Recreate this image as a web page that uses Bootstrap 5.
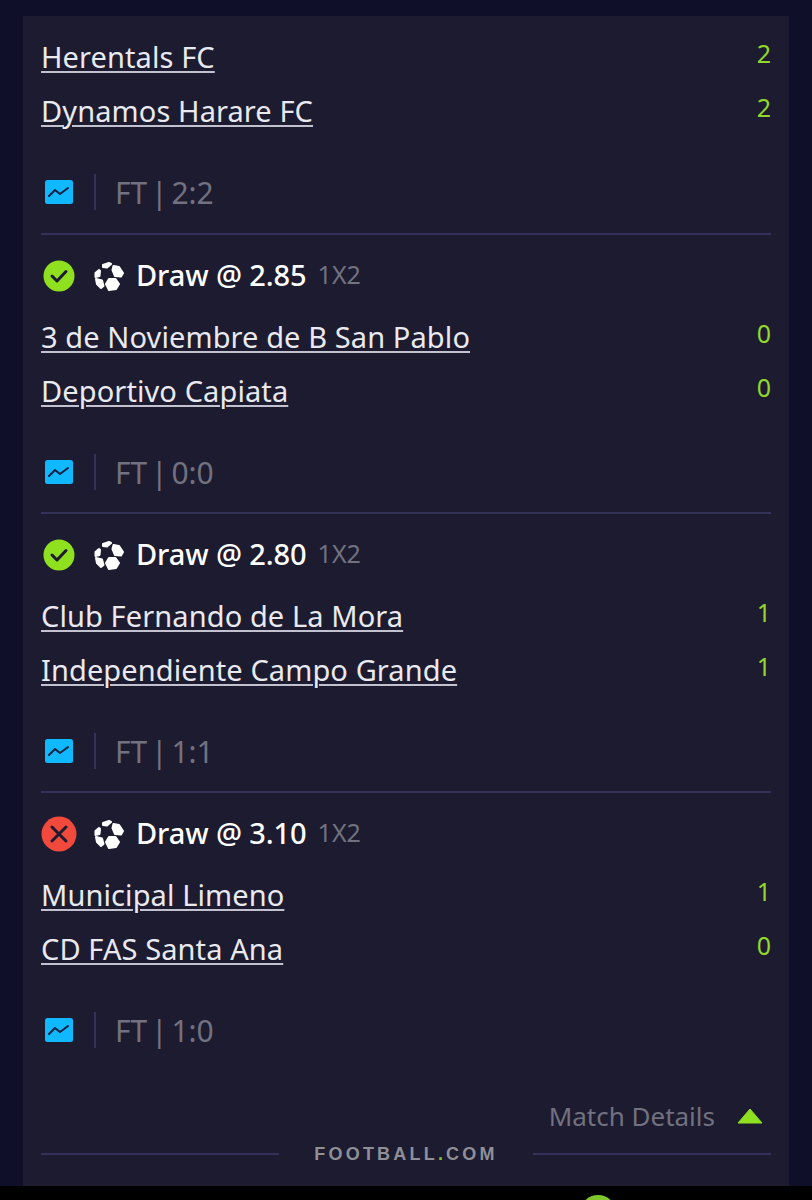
<!DOCTYPE html>
<html lang="en">
<head>
  <meta charset="UTF-8" />
  <title>Match Details</title>
  <meta name="viewport" content="width=device-width, initial-scale=1" />
  <link href="https://cdn.jsdelivr.net/npm/bootstrap@5.3.2/dist/css/bootstrap.min.css" rel="stylesheet" />
  <style>
    body {
      background: #100f29;
      font-family: "Noto Sans", sans-serif;
      height: 1200px;
      overflow: hidden;
    }
    .slip-panel {
      background: #1c1b30;
      margin: 16px 23px 0 23px;
      height: 1170px;
      padding: 15px 18px 0 18px;
    }
    .bet-block { border-bottom: 2px solid #34315a; height: 279px; padding-top: 19px; }
    .bet-block.first-block { height: 204px; padding-top: 0; }
    .bet-block.last-block { border-bottom: 0; height: 277px; }
    .bet-head { height: 44px; margin-bottom: 13px; }
    .won-icon { margin: 0 19px 0 2px; }
    .lost-icon { margin-right: 17px; }
    .pick-text { color: #fff; font-size: 29px; font-weight: 500; letter-spacing: -0.1px; margin-left: 12px; position: relative; top: -1px; }
    .market-text { color: #72717f; font-size: 25px; margin-left: 11px; position: relative; top: -1px; }
    .team-row { height: 54px; }
    .team-link { color: #e9e9ef; font-size: 29px; letter-spacing: 0.1px; line-height: 40px; margin-top: -2px; text-decoration: underline #c2c1d0; text-decoration-thickness: 2px; text-underline-offset: 3px; }
    .score-num { color: #92d72c; font-size: 25px; padding-bottom: 8px; }
    .stat-row { height: 40px; margin-top: 33px; padding-left: 4px; }
    .stat-sep { width: 2px; height: 36px; background: #34315a; margin: 0 19px 0 21px; }
    .stat-text { color: #72717f; font-size: 30px; word-spacing: -4px; }
    .details-row { height: 40px; margin-top: 26px; color: #72717f; font-size: 26px; }
    .details-arrow { margin: 0 8px 0 22px; }
    .brand-row { height: 24px; margin-top: 6px; }
    .brand-line { flex: 1; height: 2px; background: #34315a; }
    .brand-text { color: #8f8f98; font-size: 18px; font-weight: 700; letter-spacing: 3.2px; margin: 0 35px; font-family: "Liberation Sans", sans-serif; }
    .brand-text span { color: #7fc62a; }
    .bottom-bar { background: #000; height: 14px; overflow: hidden; }
    .green-bump { width: 36px; height: 36px; border-radius: 50%; background: #7ec62a; margin: 9px 0 0 580px; }
  </style>
</head>
<body>

<svg width="0" height="0" class="d-block">
  <defs>
    <symbol id="ico-ball" viewBox="0 0 30 29">
      <g fill="#fff" stroke="#fff" stroke-width="2" stroke-linejoin="round">
        <path d="M9 3 L15 1 L17 2 L13 5.5 L9 5 Z"/>
        <path d="M19.5 4 L25 5 L29 11 L27 14.5 L21 14 L18.5 8 Z"/>
        <path d="M15 17 L21.5 17 L25 22 L22 27 L15 28 L12 22 Z"/>
        <path d="M2 17 L8 18.5 L9.5 24 L7 26 L3 22 Z"/>
        <path d="M5 8 L6 9 L5.5 14 L1.5 15 L1.5 11 Z"/>
      </g>
    </symbol>
    <symbol id="ico-chart" viewBox="0 0 28 24">
      <rect width="28" height="24" rx="2.5" fill="#10b8ff"/>
      <path d="M4 16 L10 10 L15 14 L23 8" fill="none" stroke="#14213f" stroke-width="2" stroke-linecap="round" stroke-linejoin="round"/>
    </symbol>
    <symbol id="ico-won" viewBox="0 0 32 32">
      <circle cx="16" cy="16" r="15.5" fill="#8fe01f"/>
      <path d="M9 16 L14 21 L23 11.5" fill="none" stroke="#1c1b30" stroke-width="3" stroke-linecap="round" stroke-linejoin="round"/>
    </symbol>
    <symbol id="ico-lost" viewBox="0 0 36 36">
      <circle cx="18" cy="18" r="17.5" fill="#f1493b"/>
      <path d="M11 11 L25 25 M25 11 L11 25" fill="none" stroke="#1c1b30" stroke-width="3" stroke-linecap="round"/>
    </symbol>
  </defs>
</svg>

<main class="slip-panel">

  <section class="bet-block first-block">
    <div class="team-row d-flex justify-content-between align-items-center"><a class="team-link" href="#">Herentals FC</a><span class="score-num">2</span></div>
    <div class="team-row d-flex justify-content-between align-items-center"><a class="team-link" href="#">Dynamos Harare FC</a><span class="score-num">2</span></div>
    <div class="stat-row d-flex align-items-center">
      <svg width="28" height="24"><use href="#ico-chart"/></svg><div class="stat-sep"></div><span class="stat-text">FT | 2:2</span>
    </div>
  </section>

  <section class="bet-block">
    <div class="bet-head d-flex align-items-center">
      <svg width="32" height="32" class="won-icon"><use href="#ico-won"/></svg><svg width="30" height="29"><use href="#ico-ball"/></svg>
      <span class="pick-text">Draw @ 2.85</span><span class="market-text">1X2</span>
    </div>
    <div class="team-row d-flex justify-content-between align-items-center"><a class="team-link" href="#">3 de Noviembre de B San Pablo</a><span class="score-num">0</span></div>
    <div class="team-row d-flex justify-content-between align-items-center"><a class="team-link" href="#">Deportivo Capiata</a><span class="score-num">0</span></div>
    <div class="stat-row d-flex align-items-center">
      <svg width="28" height="24"><use href="#ico-chart"/></svg><div class="stat-sep"></div><span class="stat-text">FT | 0:0</span>
    </div>
  </section>

  <section class="bet-block">
    <div class="bet-head d-flex align-items-center">
      <svg width="32" height="32" class="won-icon"><use href="#ico-won"/></svg><svg width="30" height="29"><use href="#ico-ball"/></svg>
      <span class="pick-text">Draw @ 2.80</span><span class="market-text">1X2</span>
    </div>
    <div class="team-row d-flex justify-content-between align-items-center"><a class="team-link" href="#">Club Fernando de La Mora</a><span class="score-num">1</span></div>
    <div class="team-row d-flex justify-content-between align-items-center"><a class="team-link" href="#">Independiente Campo Grande</a><span class="score-num">1</span></div>
    <div class="stat-row d-flex align-items-center">
      <svg width="28" height="24"><use href="#ico-chart"/></svg><div class="stat-sep"></div><span class="stat-text">FT | 1:1</span>
    </div>
  </section>

  <section class="bet-block last-block">
    <div class="bet-head d-flex align-items-center">
      <svg width="36" height="36" class="lost-icon"><use href="#ico-lost"/></svg><svg width="30" height="29"><use href="#ico-ball"/></svg>
      <span class="pick-text">Draw @ 3.10</span><span class="market-text">1X2</span>
    </div>
    <div class="team-row d-flex justify-content-between align-items-center"><a class="team-link" href="#">Municipal Limeno</a><span class="score-num">1</span></div>
    <div class="team-row d-flex justify-content-between align-items-center"><a class="team-link" href="#">CD FAS Santa Ana</a><span class="score-num">0</span></div>
    <div class="stat-row d-flex align-items-center">
      <svg width="28" height="24"><use href="#ico-chart"/></svg><div class="stat-sep"></div><span class="stat-text">FT | 1:0</span>
    </div>
  </section>

  <div class="details-row d-flex justify-content-end align-items-center">
    <span>Match Details</span>
    <svg width="26" height="16" viewBox="0 0 26 16" class="details-arrow"><path d="M13 1 L25 15 L1 15 Z" fill="#8fe01f" stroke="#8fe01f" stroke-linejoin="round"/></svg>
  </div>

  <div class="brand-row d-flex align-items-center">
    <div class="brand-line"></div>
    <div class="brand-text">FOOTBALL<span>.</span>COM</div>
    <div class="brand-line"></div>
  </div>
</main>

<div class="bottom-bar"><div class="green-bump"></div></div>

<script src="https://cdn.jsdelivr.net/npm/bootstrap@5.3.2/dist/js/bootstrap.bundle.min.js"></script>
</body>
</html>
